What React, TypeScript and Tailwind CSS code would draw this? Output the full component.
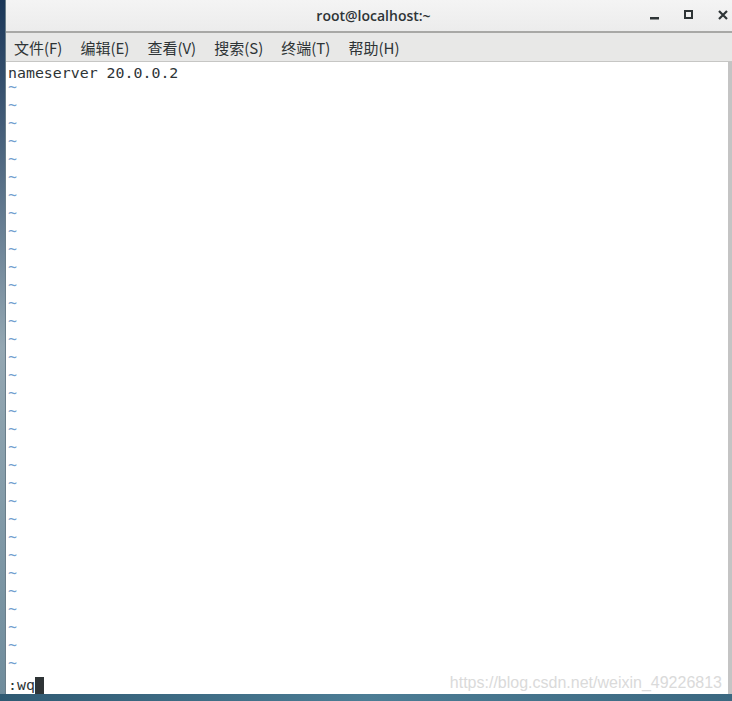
const menus = ['文件(F)', '编辑(E)', '查看(V)', '搜索(S)', '终端(T)', '帮助(H)'];

const mono = { fontFamily: '"DejaVu Sans Mono", "Liberation Mono", monospace' };

const TitleBar = () => (
  <div className="relative h-[33px] flex items-center justify-center pl-[9px] bg-gradient-to-b from-[#f4f4f4] to-[#ececec] border-b-2 border-[#a8a8a6]">
    <span className="text-[14px] font-semibold text-[#2e3436] font-['Open_Sans',sans-serif]">root@localhost:~</span>
    <div className="absolute right-0 top-0 h-full flex items-center">
      {/* minimize */}
      <svg width="34" height="33" viewBox="0 0 34 33" className="text-[#2e3436]">
        <rect x="18" y="18" width="9" height="2.5" fill="currentColor" />
      </svg>
      {/* maximize */}
      <svg width="34" height="33" viewBox="0 0 34 33" className="text-[#2e3436]">
        <rect x="19" y="12" width="7" height="7" fill="none" stroke="currentColor" strokeWidth="2" />
      </svg>
      {/* close */}
      <svg width="32" height="33" viewBox="0 0 32 33" className="text-[#2e3436]">
        <path d="M19 12 L27 20 M27 12 L19 20" stroke="currentColor" strokeWidth="2.2" />
      </svg>
    </div>
  </div>
);

const MenuBar = () => (
  <div className="h-[29px] flex items-center gap-[18px] pl-[8px] pt-[2px] bg-[#e8e8e7] border-b border-[#c6c6c4] text-[15px] text-[#2e3436] font-['Noto_Sans_CJK_SC',sans-serif]">
    {menus.map((m) => (
      <span key={m}>{m}</span>
    ))}
  </div>
);

const App = () => {
  const tildes = Array.from({ length: 33 });
  return (
    <div className="w-[732px] h-[701px] flex flex-col overflow-hidden bg-[#3f6a82]">
      <div className="flex flex-1 min-h-0">
        <div className="w-[6px] bg-gradient-to-b from-[#1a3658] via-[#94a7b2] to-[#6f8c9c] border-r border-[#6a7e8a]" />
        <div className="flex-1 flex flex-col bg-white">
          <TitleBar />
          <MenuBar />
          <div className="flex-1 flex min-h-0">
            <div className="relative flex-1 pl-[2px] pt-[2px] text-[14.9px] leading-[18px] text-[#2e3436]" style={mono}>
              <div>nameserver 20.0.0.2</div>
              {tildes.map((_, i) => (
                <div key={i} className="h-[18px] leading-[11px] text-[#729fcf]">~</div>
              ))}
              <div className="flex items-center">
                <span>:wq</span>
                <span className="inline-block w-[9px] h-[17px] bg-[#2e3436]" />
              </div>
              <div className="absolute right-[6px] bottom-[2px] text-[16px] text-[#dadada] font-['Liberation_Sans',Arial,sans-serif]">
                https://blog.csdn.net/weixin_49226813
              </div>
            </div>
            <div className="w-[4px] bg-[#c4c4c4]" />
          </div>
        </div>
      </div>
      <div className="h-[7px] bg-gradient-to-r from-[#2f5a73] via-[#4c7d95] to-[#3b6881]" />
    </div>
  );
};

export default App;
